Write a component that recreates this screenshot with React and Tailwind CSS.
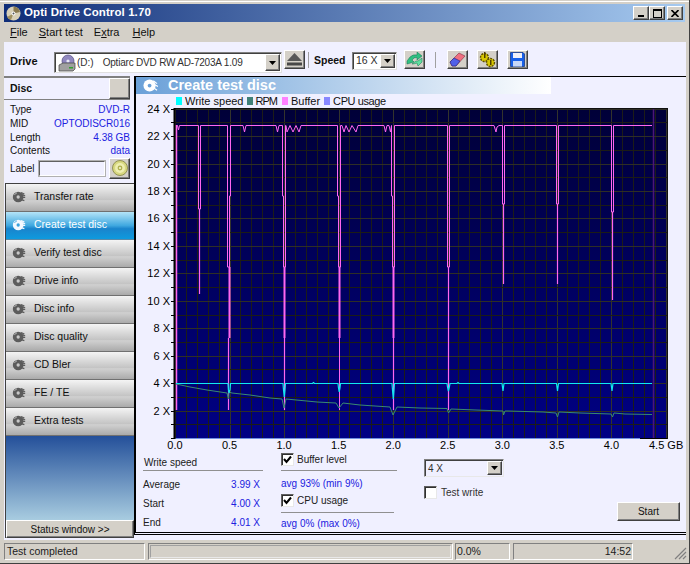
import React from "react";

const W = 544, H = 345; // svg origin at page (142,105)
const ox = 142, oy = 105;
const X = (p) => p - ox;
const Y = (p) => p - oy;

const vlines = [];
for (let i = 0; i <= 45; i++) vlines.push(Math.round(175 + i * 10.9) + 0.5);
const hlines = [];
for (let i = 0; i <= 24; i++) hlines.push(Math.round(438 - i * 13.72) + 0.5);
const yLabels = [24, 22, 20, 18, 16, 14, 12, 10, 8, 6, 4, 2];
const xLabels = ["0.0", "0.5", "1.0", "1.5", "2.0", "2.5", "3.0", "3.5", "4.0"];

const path = (pts) => pts.map((p, i) => (i ? "L" : "M") + X(p[0]) + " " + Y(p[1])).join(" ");

const bufferTop = [
  [176.5, 125.5], [177.5, 125.5], [178.5, 130], [179.5, 125.5], [198.5, 125.5], [198.5, 209], [200.5, 209], [200.5, 125.5],
  [227.5, 125.5], [227.5, 267], [229.5, 267], [229.5, 196], [230.5, 196], [230.5, 125.5],
  [243, 125.5], [244.5, 132], [246, 125.5], [276, 125.5], [277.5, 132], [279, 125.5], [282.5, 125.5], [282.5, 196], [283.5, 196], [283.5, 267], [285.5, 267], [285.5, 125.5],
  [286, 125.5], [287, 132], [290, 125.5], [293, 132], [296, 125.5], [299, 132], [301, 125.5], [337.5, 125.5], [337.5, 196], [338.5, 196], [338.5, 267], [340.5, 267], [340.5, 125.5],
  [342, 125.5], [344, 132], [346, 125.5], [349, 132], [352, 125.5], [356, 132], [358, 125.5], [384, 125.5], [385.5, 132], [387, 125.5], [389, 125.5], [390.5, 132], [391.5, 125.5], [391.5, 196], [392.5, 196], [392.5, 267], [394.5, 267], [394.5, 125.5],
  [447.5, 125.5], [447.5, 267], [449.5, 267], [449.5, 125.5], [494, 125.5], [496, 132], [497, 127], [499, 125.5], [502.5, 125.5], [502.5, 204], [504.5, 204], [504.5, 125.5],
  [556.5, 125.5], [556.5, 204], [558.5, 204], [558.5, 125.5], [611.5, 125.5], [611.5, 212], [613.5, 212], [613.5, 125.5], [652, 125.5],
];

const singles = [
  [176.5, 125, 410, 1.5], [199.5, 209, 294, 1.2], [228.5, 338, 410, 1.2], [284.5, 338, 410, 1.2], [339.5, 338, 410, 1],
  [393.5, 338, 410, 1.2], [448.5, 267, 410, 1.2], [503.5, 204, 284, 1.2], [557.5, 204, 284, 1.2], [612.5, 212, 300, 1.2],
  [229.5, 267, 338, 2], [284.5, 267, 338, 2], [339.5, 267, 338, 2], [393.5, 267, 338, 2],
];

const cyan = [
  [176, 383.5], [228, 383.5], [228.5, 390], [229, 393], [230, 390], [230.5, 383.5], [283, 383.5], [283.5, 390], [284.3, 397], [285, 390], [285.5, 383.5],
  [312.5, 383.5], [313.5, 382.5], [314.5, 383.5], [338, 383.5], [338.5, 388], [339.2, 392], [340, 388], [340.5, 383.5], [392, 383.5], [392.5, 390], [393.3, 399], [394, 390], [394.5, 383.5],
  [447, 383.5], [447.5, 387], [448.4, 391], [449.4, 387], [450, 383.5], [457, 383.5], [458, 382.5], [459, 383.5], [502, 383.5], [503, 391], [504, 383.5], [556.5, 383.5], [557.5, 391], [558.5, 383.5], [611, 383.5], [612, 391], [613, 383.5], [652, 383.5],
];

const green = [
  [176, 384], [190, 387], [207, 390], [227, 393], [228.5, 399], [229, 392], [232, 393], [250, 395], [270, 398], [282, 399], [284, 408], [286, 399], [317, 402], [336, 403], [339, 408], [343, 403], [360, 405], [390, 407], [393, 415], [397, 407], [420, 408], [447, 408.5], [448.5, 413], [451, 409], [476, 410], [503, 411], [503.5, 415], [505, 411], [508, 411], [543, 412], [556, 413], [557.5, 417], [559, 412], [580, 413], [611, 414], [612.5, 417], [614, 413], [625, 414], [652, 414.5],
];

function Chart() {
  return (
    <svg width={W} height={H} className="block shrink-0 overflow-visible" style={{ fontFamily: "'Liberation Sans',sans-serif" }}>
      <defs>
        <linearGradient id="plotbg" x1="0" y1="0" x2="0" y2="1">
          <stop offset="0" stopColor="#000038" />
          <stop offset="1" stopColor="#000084" />
        </linearGradient>
      </defs>
      <rect x={X(175)} y={Y(109)} width={492} height={329} fill="url(#plotbg)" />
      {vlines.map((x, i) => (
        <line key={i} x1={X(x)} x2={X(x)} y1={Y(109)} y2={Y(438)} stroke={i % 5 === 0 ? "#33332c" : "#1c1c18"} strokeWidth="1" />
      ))}
      {hlines.map((y, i) => (
        <line key={i} x1={X(175)} x2={X(667)} y1={Y(y)} y2={Y(y)} stroke={i % 2 === 0 ? "#2e2e26" : "#1c1c16"} strokeWidth="1" />
      ))}
      <line x1={X(653.5)} x2={X(653.5)} y1={Y(109)} y2={Y(438)} stroke="#4c1678" strokeWidth="1.5" />
      {hlines.map((y, i) => (
        <line key={i} x1={X(171)} x2={X(175)} y1={Y(y)} y2={Y(y)} stroke="#000" strokeWidth="1" />
      ))}
      <rect x={X(174.5)} y={Y(108.5)} width={493} height={330} fill="none" stroke="#101010" strokeWidth="1" />
      <line x1={X(175)} x2={X(667)} y1={Y(438.5)} y2={Y(438.5)} stroke="#7090e0" strokeWidth="1" />
      <line x1={X(174.5)} x2={X(174.5)} y1={Y(108)} y2={Y(439)} stroke="#000" strokeWidth="2" />
      <line x1={X(640)} x2={X(667)} y1={Y(438.5)} y2={Y(438.5)} stroke="#000" strokeWidth="1" />
      {singles.map((s, i) => (
        <line key={i} x1={X(s[0])} x2={X(s[0])} y1={Y(s[1])} y2={Y(s[2])} stroke="#ff66f0" strokeWidth={s[3]} />
      ))}
      <path d={path(bufferTop)} fill="none" stroke="#ff66f0" strokeWidth="1" />
      <path d={path(green)} fill="none" stroke="#3a8a70" strokeWidth="1" />
      <path d={path(cyan)} fill="none" stroke="#10e8f0" strokeWidth="1.2" />
      {yLabels.map((v) => (
        <text key={v} x={X(170)} y={Y(438 - v * 13.72 + 4)} textAnchor="end" fontSize="11" fill="#000">{v} X</text>
      ))}
      {xLabels.map((v, i) => (
        <text key={v} x={X(175 + i * 54.55)} y={Y(449)} textAnchor="middle" fontSize="11" fill="#000">{v}</text>
      ))}
      <text x={X(649)} y={Y(449)} fontSize="11" fill="#000">4.5 GB</text>
    </svg>
  );
}

function NavIcon({ active }) {
  const c = active ? "#f4f8ff" : "#5c5c5c";
  const k = active ? "#3aa0dc" : "#c8c8c8";
  return (
    <svg width="14" height="14" viewBox="0 0 17 17" className="shrink-0">
      <circle cx="7.5" cy="8.5" r="6.5" fill={c} />
      <circle cx="7.5" cy="8.5" r="2" fill={k} />
      <path d="M11 3 L15 5 M12 6 L16 7 M12.5 9 L16 9 M12 12 L15 13" stroke={c} strokeWidth="1.5" />
      <path d="M3 6 A5 5 0 0 1 6 3.5" stroke={k} strokeWidth="1" fill="none" />
    </svg>
  );
}

const navItems = ["Transfer rate", "Create test disc", "Verify test disc", "Drive info", "Disc info", "Disc quality", "CD Bler", "FE / TE", "Extra tests"];

function Nav({ label, active }) {
  return (
    <div
      className={
        active
          ? "h-[28px] shrink-0 flex items-center gap-[8px] pl-[6px] border-b border-[#5a8aa8] bg-[linear-gradient(#b4e4f8_0%,#40a8e0_50%,#1a84cc_62%,#0e9ade_100%)] text-white"
          : "h-[28px] shrink-0 flex items-center gap-[8px] pl-[6px] border-b border-[#707070] bg-[linear-gradient(#f4f4f4_0%,#c4c4c4_58%,#d0d0d0_62%,#aaaaaa_100%)] text-[#101010]"
      }
    >
      <NavIcon active={active} />
      <span className="text-[10.5px]">{label}</span>
    </div>
  );
}

function Raised({ className = "", children }) {
  return (
    <div className={"bg-[#d4d0c8] border border-t-white border-l-white border-r-[#404040] border-b-[#404040] flex items-center justify-center shadow-[inset_-1px_-1px_0_#808080] " + className}>
      {children}
    </div>
  );
}

function DropBtn({ className = "" }) {
  return (
    <Raised className={"shrink-0 ml-auto " + className}>
      <svg width="7" height="4"><path d="M0 0H7L3.5 4Z" fill="#000" /></svg>
    </Raised>
  );
}

function Check({ checked }) {
  return (
    <div className="w-[13px] h-[13px] bg-white border border-t-[#606060] border-l-[#606060] border-r-[#e8e8e8] border-b-[#e8e8e8] shadow-[inset_1px_1px_0_#303030] flex items-center justify-center shrink-0">
      {checked && (
        <svg width="9" height="9" viewBox="0 0 9 9"><path d="M1 4 L3.5 7 L8 1.5" fill="none" stroke="#000" strokeWidth="2" /></svg>
      )}
    </div>
  );
}

function InfoRow({ k, v }) {
  return (
    <div className="h-[13.7px] flex justify-between items-center">
      <span className="text-[#101010]">{k}</span>
      <span className="text-[#2020e0]">{v}</span>
    </div>
  );
}

function Stat({ k, v }) {
  return (
    <div className="h-[19px] flex justify-between items-center pr-[3px]">
      <span className="text-[#202020]">{k}</span>
      <span className="text-[#2020e0]">{v}</span>
    </div>
  );
}

function Disc({ size = 16 }) {
  return (
    <svg width={size} height={size} viewBox="0 0 16 16">
      <circle cx="8" cy="8" r="7.5" fill="#d8d880" stroke="#808040" strokeWidth="0.8" />
      <circle cx="8" cy="8" r="5" fill="#eeeeb0" />
      <circle cx="8" cy="8" r="2.4" fill="#b0b050" />
      <circle cx="8" cy="8" r="1.1" fill="#f4f4d0" />
    </svg>
  );
}

export default function App() {
  return (
    <div className="w-[690px] h-[564px] bg-[#d4d0c8] border-r border-b border-[#404040] flex flex-col overflow-hidden pt-[1px] text-[10px] text-black" style={{ fontFamily: "'Liberation Sans',sans-serif" }}>
      <div className="h-[3px] border-t border-white shrink-0" />
      {/* title bar */}
      <div className="mx-[4px] h-[18px] shrink-0 flex items-center pl-[2px] pr-[2px] bg-[linear-gradient(90deg,#0f2d78,#a6caf0)]">
        <svg width="15" height="15" viewBox="0 0 15 15" className="shrink-0">
          <circle cx="7.5" cy="7.5" r="7" fill="#d8d0b8" />
          <path d="M7.5 7.5 L7.5 .5 A7 7 0 0 1 14 6Z" fill="#8a7a50" />
          <path d="M7.5 7.5 L1 11 A7 7 0 0 0 5 14Z" fill="#a09060" />
          <circle cx="7.5" cy="7.5" r="2" fill="#fff" />
          <circle cx="7.5" cy="7.5" r="1" fill="#555" />
        </svg>
        <span className="ml-[3px] text-white font-bold text-[11.5px] tracking-[0.1px]">Opti Drive Control 1.70</span>
        <div className="ml-auto flex items-center">
          <Raised className="w-[16px] h-[14px] items-end pb-[2px]"><div className="w-[6px] h-[2px] bg-black" /></Raised>
          <Raised className="w-[16px] h-[14px]"><div className="w-[9px] h-[9px] border border-black border-t-2" /></Raised>
          <Raised className="w-[16px] h-[14px] ml-[2px]">
            <svg width="8" height="7"><path d="M0.5 0 L7.5 7 M7.5 0 L0.5 7" stroke="#000" strokeWidth="1.6" /></svg>
          </Raised>
        </div>
      </div>
      {/* menu */}
      <div className="h-[20px] shrink-0 flex items-center pl-[10px] gap-[11px] text-[11px] text-[#101010]">
        <span><u>F</u>ile</span>
        <span><u>S</u>tart test</span>
        <span>E<u>x</u>tra</span>
        <span className="ml-[2px]"><u>H</u>elp</span>
      </div>
      {/* body */}
      <div className="flex-1 min-h-0 mx-[4px] mr-[3px] bg-[#f0f0ff] flex flex-col">
        {/* toolbar */}
        <div className="h-[34px] shrink-0 flex items-start pt-[8px] pl-[6px]">
          <span className="w-[44px] font-bold pt-[3px] text-[11px] text-[#101010]">Drive</span>
          <div className="w-[228px] h-[21px] mt-[2px] bg-white border border-t-[#808080] border-l-[#808080] border-r-[#e0e0e0] border-b-[#e0e0e0] shadow-[inset_1px_1px_0_#404040] flex items-center pl-[3px] pr-[1px]">
            <svg width="18" height="18" viewBox="0 0 18 18" className="shrink-0">
              <circle cx="10" cy="7" r="6" fill="#9088c0" stroke="#504880" strokeWidth=".7" />
              <circle cx="10" cy="7" r="1.6" fill="#e8e8f8" />
              <path d="M1 11 L5 9 H17 V15 L15 17 H1Z" fill="#a0a0a0" stroke="#404040" strokeWidth=".7" />
              <rect x="11" y="13" width="4" height="1.5" fill="#30a030" />
            </svg>
            <span className="ml-[1px] text-[#303030] text-[10px] whitespace-pre">(D:)</span>
            <span className="ml-[9px] text-[#303030] text-[10px] tracking-[-0.2px] whitespace-pre">Optiarc DVD RW AD-7203A 1.09</span>
            <DropBtn className="w-[15px] h-[17px]" />
          </div>
          <Raised className="w-[21px] h-[19px] ml-[2px]">
            <svg width="15" height="13" viewBox="0 0 15 13">
              <path d="M7.5 0 L15 8 H0Z" fill="#585858" />
              <rect y="9.5" width="15" height="3" fill="#484848" />
            </svg>
          </Raised>
          <div className="w-px h-[16px] bg-[#a0a0a0] ml-[3px] mt-[2px]" />
          <span className="ml-[5px] w-[38px] font-bold pt-[3px] text-[10.5px] text-[#101010]">Speed</span>
          <div className="w-[45px] h-[18px] mt-[2px] bg-white border border-t-[#808080] border-l-[#808080] border-r-[#e0e0e0] border-b-[#e0e0e0] shadow-[inset_1px_1px_0_#404040] flex items-center pl-[3px] pr-[1px]">
            <span className="text-[#303030] text-[10.5px]">16 X</span>
            <DropBtn className="w-[15px] h-[14px]" />
          </div>
          <Raised className="w-[21px] h-[19px] ml-[7px]">
            <svg width="17" height="15" viewBox="0 0 17 15">
              <path d="M1 9 L4 5 Q7 2 11 3 L11 0 L16 4 L11 8 L11 5.5 Q8 5 6 8 L8 10 L1 12Z" fill="#30c080" stroke="#107050" strokeWidth=".5" />
              <path d="M16 6 L16 10 L12 14 L11 11 Q8 12 6 12 L10 9 L12 9Z" fill="#60e0a0" stroke="#107050" strokeWidth=".5" />
            </svg>
          </Raised>
          <div className="w-px h-[16px] bg-[#a0a0a0] ml-[10px] mt-[2px]" />
          <Raised className="w-[21px] h-[19px] ml-[11px]">
            <svg width="17" height="15" viewBox="0 0 17 15">
              <path d="M1 10 L10 1 L16 4 L7 14 L3 14Z" fill="#f07080" stroke="#803040" strokeWidth=".6" />
              <path d="M1 10 L5 6 L11 9 L7 14 L3 14Z" fill="#5060e8" stroke="#202080" strokeWidth=".6" />
            </svg>
          </Raised>
          <Raised className="w-[21px] h-[19px] ml-[9px]">
            <svg width="17" height="16" viewBox="0 0 17 16">
              <circle cx="5.5" cy="5.5" r="4" fill="#d8c800" stroke="#605000" strokeWidth="1.4" strokeDasharray="2 1" />
              <circle cx="11.5" cy="10.5" r="4" fill="#d8c800" stroke="#605000" strokeWidth="1.4" strokeDasharray="2 1" />
              <rect x="5" y="0" width="1.5" height="6" fill="#504000" />
              <rect x="11" y="8" width="1.5" height="5" fill="#504000" />
            </svg>
          </Raised>
          <Raised className="w-[21px] h-[19px] ml-[9px]">
            <svg width="15" height="15" viewBox="0 0 15 15">
              <path d="M0.5 0.5 H13 L14.5 2 V14.5 H0.5Z" fill="#1860e8" stroke="#103080" strokeWidth=".7" />
              <rect x="3" y="1" width="9" height="5" fill="#f0f0f8" />
              <rect x="3" y="9" width="9" height="5.5" fill="#c8d8f8" />
            </svg>
          </Raised>
        </div>
        {/* content */}
        <div className="flex-1 min-h-0 flex">
          {/* left */}
          <div className="w-[130px] shrink-0 flex flex-col mb-[2px]">
            <div className="h-[24px] shrink-0 border-t-2 border-b border-t-[#808080] border-b-[#808080] flex items-center pl-[6px] mr-[4px]">
              <span className="font-bold text-[10.5px] text-[#101010]">Disc</span>
              <Raised className="ml-auto w-[21px] h-[21px]" />
            </div>
            <div className="pl-[6px] pr-[4px] pt-[3px] shrink-0">
              <InfoRow k="Type" v="DVD-R" />
              <InfoRow k="MID" v="OPTODISCR016" />
              <InfoRow k="Length" v="4.38 GB" />
              <InfoRow k="Contents" v="data" />
              <div className="flex items-center h-[21px]">
                <span className="w-[29px] text-[#101010]">Label</span>
                <div className="w-[66px] h-[15px] bg-[#f0f0ff] border border-t-[#606060] border-l-[#606060] border-r-white border-b-white shadow-[0_0_0_1px_#b0b0b0]" />
                <Raised className="w-[21px] h-[21px] ml-auto"><Disc /></Raised>
              </div>
            </div>
            <div className="flex-1 min-h-0 flex flex-col mt-[4px] ml-[1px] border-l border-t border-[#404040]">
              {navItems.map((n) => (
                <Nav key={n} label={n} active={n === "Create test disc"} />
              ))}
              <div className="flex-1 min-h-0 bg-[linear-gradient(#24509a,#a8cce0)]" />
              <Raised className="h-[18px] shrink-0 text-[10px] text-[#101010]">Status window &gt;&gt;</Raised>
            </div>
          </div>
          {/* main */}
          <div className="flex-1 min-w-0 border-l-2 border-t border-b-[3px] border-black [border-bottom-style:double] flex flex-col mb-[5px]">
            <div className="h-[17px] shrink-0 w-[415px] flex items-center pl-[7px] bg-[linear-gradient(90deg,#6aa0d8,#ffffff)]">
              <svg width="15" height="15" viewBox="0 0 16 16" className="shrink-0">
                <circle cx="7" cy="8" r="6.5" fill="#fff" />
                <circle cx="7" cy="8" r="2" fill="#6aa0d8" />
                <path d="M11 3 L15 6 M12 7 L16 9 M12 11 L15 13" stroke="#fff" strokeWidth="1.3" />
              </svg>
              <span className="ml-[10px] text-white font-bold text-[14.5px]">Create test disc</span>
            </div>
            <div className="h-[12px] mt-[1px] shrink-0 flex items-center pl-[40px] gap-[3px] text-[11px] text-[#101010]">
              <span className="flex items-center gap-[3px]"><span className="w-[6px] h-[8px] bg-[#00ffff]" />Write speed</span>
              <span className="flex items-center gap-[3px]"><span className="w-[6px] h-[8px] bg-[#408078]" /><span className="tracking-[-1px]">RPM</span></span>
              <span className="flex items-center gap-[3px] ml-[2px]"><span className="w-[6px] h-[8px] bg-[#ff80ff]" />Buffer</span>
              <span className="flex items-center gap-[3px] ml-[1px]"><span className="w-[6px] h-[8px] bg-[#8888ff]" /><span className="tracking-[-0.4px]">CPU usage</span></span>
            </div>
            <div className="h-[345px] shrink-0 pl-[6px] -mt-[2px]">
              <Chart />
            </div>
            <div className="flex-1 min-h-0 flex pl-[7px]">
              <div className="w-[120px] shrink-0">
                <div className="h-[21px] border-b border-[#909090] text-[#202020] flex items-end pl-[1px]">Write speed</div>
                <div className="pt-[4px]">
                  <Stat k="Average" v="3.99 X" />
                  <Stat k="Start" v="4.00 X" />
                  <Stat k="End" v="4.01 X" />
                </div>
              </div>
              <div className="w-[116px] ml-[18px] shrink-0 text-[#202020]">
                <div className="h-[21px] border-b border-[#909090] flex items-start gap-[3px] pt-[3px]"><Check checked /><span className="leading-[13px]">Buffer level</span></div>
                <div className="text-[#2020e0] h-[21px] pt-[6px] leading-[14px]">avg 93% (min 9%)</div>
                <div className="h-[21px] pt-[2px] border-b border-[#909090] w-[113px] flex items-start gap-[3px]"><Check checked /><span className="leading-[13px]">CPU usage</span></div>
                <div className="text-[#2020e0] pt-[4px] leading-[14px]">avg 0% (max 0%)</div>
              </div>
              <div className="w-[80px] ml-[27px] pt-[9px] shrink-0">
                <div className="h-[18px] bg-[#f0f0ff] border border-t-[#808080] border-l-[#808080] border-r-[#e8e8e8] border-b-[#e8e8e8] shadow-[inset_1px_1px_0_#404040] flex items-center pl-[3px] pr-[1px] text-[#303030]">
                  4 X
                  <DropBtn className="w-[15px] h-[14px]" />
                </div>
                <div className="flex items-center gap-[4px] mt-[8px] text-[#303030]">
                  <Check />
                  <span>Test write</span>
                </div>
              </div>
              <div className="flex-1 min-w-0 flex items-end justify-end pr-[6px] pb-[11px]">
                <Raised className="w-[63px] h-[19px] text-[#101010]">Start</Raised>
              </div>
            </div>
          </div>
        </div>
      </div>
      {/* status bar */}
      <div className="h-[23px] shrink-0 flex items-center pl-[4px] pr-[2px] pb-[3px] pt-[3px] text-[10.5px] text-[#202020]">
        <div className="w-[141px] h-[17px] border border-t-[#808080] border-l-[#808080] border-r-white border-b-white flex items-center pl-[2px]">Test completed</div>
        <div className="w-[305px] h-[17px] ml-[3px] border border-t-[#808080] border-l-[#808080] border-r-white border-b-white p-[1px]">
          <div className="w-full h-full border border-t-[#a0a0a0] border-l-[#a0a0a0] border-r-[#e8e8e8] border-b-[#e8e8e8]" />
        </div>
        <div className="w-[55px] h-[17px] ml-[2px] border border-t-[#808080] border-l-[#808080] border-r-white border-b-white flex items-center pl-[1px]">0.0%</div>
        <div className="w-[120px] h-[17px] ml-[3px] border border-t-[#808080] border-l-[#808080] border-r-white border-b-white flex items-center justify-end pr-[1px]">14:52</div>
        <svg width="13" height="13" viewBox="0 0 13 13" className="ml-auto self-end">
          <path d="M12 1 L1 12 M12 5 L5 12 M12 9 L9 12" stroke="#808080" strokeWidth="1.2" />
        </svg>
      </div>
    </div>
  );
}
